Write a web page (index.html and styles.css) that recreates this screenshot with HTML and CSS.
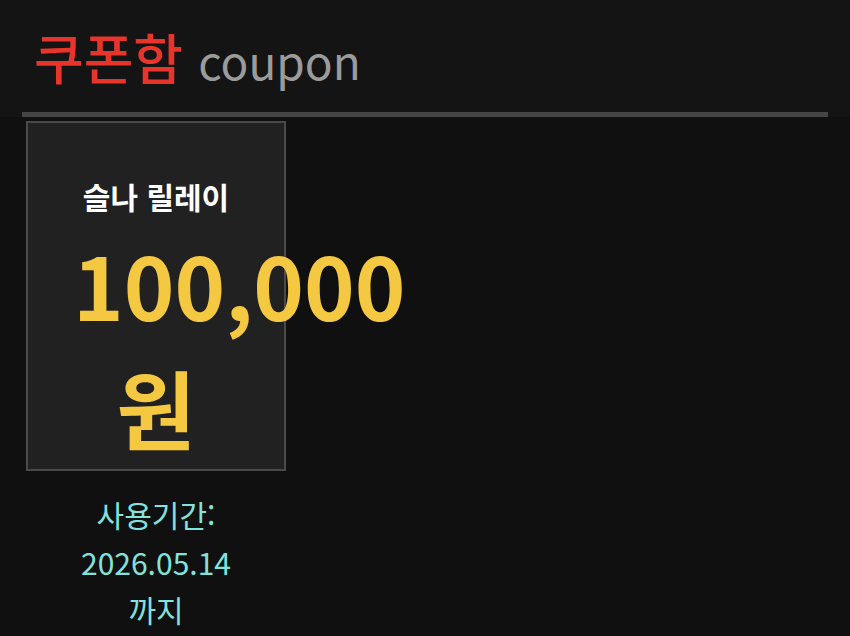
FILE: index.html
```html
<!DOCTYPE html>
<html lang="ko">
<head>
<meta charset="utf-8">
<link rel="stylesheet" href="styles.css">
</head>
<body>
<div class="page">
  <header class="header">
    <h1 class="title"><span class="title-ko">쿠폰함</span> <span class="title-en">coupon</span></h1>
  </header>
  <div class="coupons">
    <div class="coupon">
      <div class="card">
        <div class="card-name">슬나 릴레이</div>
        <div class="card-amount">100,000 원</div>
      </div>
      <div class="expiry">
        <p>사용기간:</p>
        <p>2026.05.14</p>
        <p>까지</p>
      </div>
    </div>
  </div>
</div>
</body>
</html>
```
FILE: styles.css
```css
html, body {
  margin: 0;
  padding: 0;
  background: #111011;
}
body {
  font-family: "Noto Sans CJK KR", "Noto Sans", sans-serif;
  width: 850px;
  height: 636px;
  overflow: hidden;
}
.page {
  padding: 0 22px;
}
.header {
  background: #141414;
  margin: 0 -22px;
  padding: 0 22px;
}
.title {
  margin: 0;
  padding: 24px 0 19px 12px;
  font-weight: 500;
  font-size: 54px;
  line-height: 66px;
  border-bottom: 5px solid #454545;
}
.title-ko {
  color: #e8352b;
}
.title-en {
  color: #9b9b9b;
  font-size: 46px;
  font-weight: 400;
}
.coupons {
  display: flex;
  padding: 4px 0 0 4px;
}
.coupon {
  width: 260px;
}
.card {
  box-sizing: border-box;
  width: 260px;
  height: 350px;
  background: #222122;
  border: 2px solid #4a4a4a;
  padding: 50px 45px 0;
  text-align: center;
}
.card-name {
  color: #ffffff;
  font-weight: 700;
  font-size: 30px;
  line-height: 46px;
}
.card-amount {
  color: #f5c842;
  font-weight: 700;
  font-size: 86px;
  line-height: 123px;
  margin-top: 3px;
}
.expiry {
  text-align: center;
  color: #82e3dc;
  font-size: 30px;
  padding-top: 20px;
}
.expiry p {
  margin: 0;
  line-height: 47.5px;
}
```
